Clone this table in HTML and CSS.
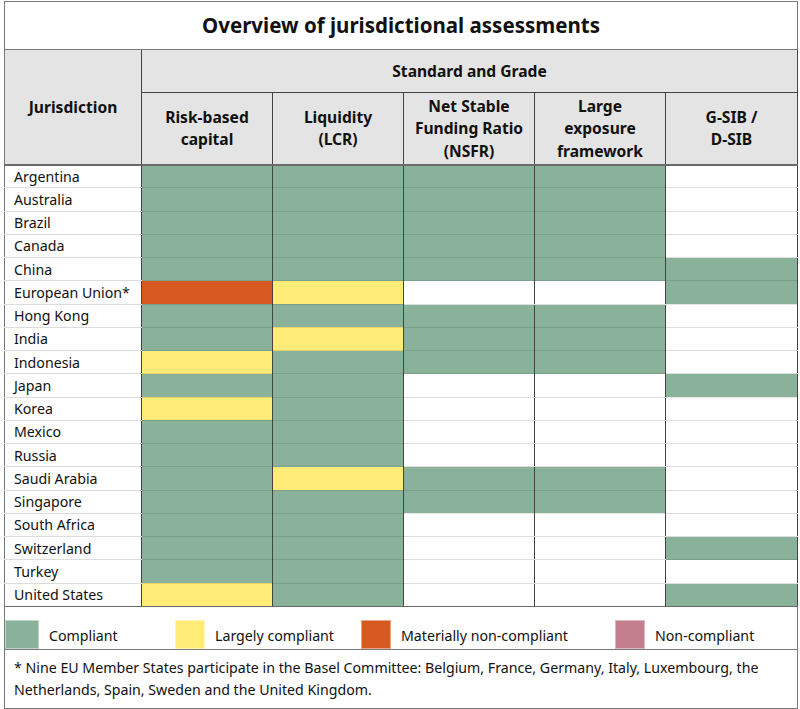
FILE: index.html
```html
<!DOCTYPE html>
<html lang="en">
<head>
<meta charset="utf-8">
<title>Overview of jurisdictional assessments</title>
<link rel="stylesheet" href="styles.css">
</head>
<body>
<div class="page">
<table class="grid">
  <colgroup>
    <col class="c-jur"><col class="c-std"><col class="c-std"><col class="c-std"><col class="c-std"><col class="c-last">
  </colgroup>
  <thead>
    <tr class="r-title"><th colspan="6" class="title">Overview of jurisdictional assessments</th></tr>
    <tr class="r-std">
      <th rowspan="2" class="h jur-h">Jurisdiction</th>
      <th colspan="5" class="h">Standard and Grade</th>
    </tr>
    <tr class="r-sub">
      <th class="h sub">Risk-based<br>capital</th>
      <th class="h sub">Liquidity<br>(LCR)</th>
      <th class="h sub">Net Stable<br>Funding Ratio<br>(NSFR)</th>
      <th class="h sub">Large<br>exposure<br>framework</th>
      <th class="h sub">G-SIB /<br>D-SIB</th>
    </tr>
  </thead>
  <tbody>
    <tr><td class="name">Argentina</td><td class="g"></td><td class="g"></td><td class="g"></td><td class="g"></td><td class="w"></td></tr>
    <tr><td class="name">Australia</td><td class="g"></td><td class="g"></td><td class="g"></td><td class="g"></td><td class="w"></td></tr>
    <tr><td class="name">Brazil</td><td class="g"></td><td class="g"></td><td class="g"></td><td class="g"></td><td class="w"></td></tr>
    <tr><td class="name">Canada</td><td class="g"></td><td class="g"></td><td class="g"></td><td class="g"></td><td class="w"></td></tr>
    <tr><td class="name">China</td><td class="g"></td><td class="g"></td><td class="g"></td><td class="g"></td><td class="g"></td></tr>
    <tr><td class="name">European Union*</td><td class="o"></td><td class="y"></td><td class="w"></td><td class="w"></td><td class="g"></td></tr>
    <tr><td class="name">Hong Kong</td><td class="g"></td><td class="g"></td><td class="g"></td><td class="g"></td><td class="w"></td></tr>
    <tr><td class="name">India</td><td class="g"></td><td class="y"></td><td class="g"></td><td class="g"></td><td class="w"></td></tr>
    <tr><td class="name">Indonesia</td><td class="y"></td><td class="g"></td><td class="g"></td><td class="g"></td><td class="w"></td></tr>
    <tr><td class="name">Japan</td><td class="g"></td><td class="g"></td><td class="w"></td><td class="w"></td><td class="g"></td></tr>
    <tr><td class="name">Korea</td><td class="y"></td><td class="g"></td><td class="w"></td><td class="w"></td><td class="w"></td></tr>
    <tr><td class="name">Mexico</td><td class="g"></td><td class="g"></td><td class="w"></td><td class="w"></td><td class="w"></td></tr>
    <tr><td class="name">Russia</td><td class="g"></td><td class="g"></td><td class="w"></td><td class="w"></td><td class="w"></td></tr>
    <tr><td class="name">Saudi Arabia</td><td class="g"></td><td class="y"></td><td class="g"></td><td class="g"></td><td class="w"></td></tr>
    <tr><td class="name">Singapore</td><td class="g"></td><td class="g"></td><td class="g"></td><td class="g"></td><td class="w"></td></tr>
    <tr><td class="name">South Africa</td><td class="g"></td><td class="g"></td><td class="w"></td><td class="w"></td><td class="w"></td></tr>
    <tr><td class="name">Switzerland</td><td class="g"></td><td class="g"></td><td class="w"></td><td class="w"></td><td class="g"></td></tr>
    <tr><td class="name">Turkey</td><td class="g"></td><td class="g"></td><td class="w"></td><td class="w"></td><td class="w"></td></tr>
    <tr class="last"><td class="name">United States</td><td class="y"></td><td class="g"></td><td class="w"></td><td class="w"></td><td class="g"></td></tr>
  </tbody>
  <tfoot>
    <tr class="r-legend">
      <td colspan="6" class="legend-cell">
        <div class="legend">
          <span class="sw g1"></span><span class="lbl">Compliant</span>
          <span class="sw y1"></span><span class="lbl">Largely compliant</span>
          <span class="sw o1"></span><span class="lbl">Materially non-compliant</span>
          <span class="sw p1"></span><span class="lbl">Non-compliant</span>
        </div>
      </td>
    </tr>
    <tr class="r-note">
      <td colspan="6" class="note">* Nine EU Member States participate in the Basel Committee: Belgium, France, Germany, Italy, Luxembourg, the<br>Netherlands, Spain, Sweden and the United Kingdom.</td>
    </tr>
  </tfoot>
</table>
</div>
</body>
</html>
```

FILE: styles.css
```css
html, body {
  margin: 0;
  padding: 0;
  background: #ffffff;
}

body {
  font-family: "Noto Sans", "Open Sans", sans-serif;
  color: #111111;
}

.page {
  padding: 1px 3px 0 4px;
}

.grid {
  border-collapse: collapse;
  table-layout: fixed;
  width: 794px;
  border: 1px solid #7a7a7a;
}

.c-jur { width: 137px; }
.c-std { width: 131px; }
.c-last { width: 132px; }

.r-title { height: 48px; }
.title {
  font-size: 20.5px;
  font-weight: 700;
  text-align: center;
  vertical-align: middle;
  padding: 0 0 2px 0;
  border-bottom: 1px solid #7a7a7a;
  background: #ffffff;
}

.h {
  background: #e4e4e4;
  font-size: 15.6px;
  font-weight: 700;
  line-height: 22.5px;
  text-align: center;
  vertical-align: middle;
  padding: 0;
  border: 1px solid #444444;
}

.r-std { height: 43px; }
.r-std .h { border-top: 1px solid #7a7a7a; padding-top: 1px; }
.jur-h { border-left: 1px solid #7a7a7a; border-bottom: 2px solid #6a6a6a; }
.r-sub { height: 72px; }
.sub { border-bottom: 2px solid #6a6a6a; }

tbody tr { height: 23.25px; }

td {
  padding: 0;
}

.name {
  font-size: 14.2px;
  line-height: 20px;
  padding: 1px 0 0 9px;
  text-align: left;
  vertical-align: middle;
  border-right: 1px solid #444444;
  border-bottom: 1px solid #dcdcdc;
  white-space: nowrap;
}

tbody td + td {
  border-left: 1px solid #444444;
  border-right: 1px solid #444444;
  border-bottom: 1px solid rgba(0, 0, 0, 0.1);
}

.g { background: #8ab29b; }
.y { background: #ffeb78; }
.o { background: #d65a1f; }
.w { background: #ffffff; }
tbody td.w { border-bottom-color: #dedede; }

tbody tr.last td { border-bottom: 1px solid #6a6a6a; }

.r-legend { height: 43px; }
.legend-cell {
  vertical-align: bottom;
  padding: 0;
  border-bottom: 1px solid #7a7a7a;
}

.legend {
  display: grid;
  grid-template-columns: 34px 136px 30px 156px 30px 224px 30px 1fr;
  align-items: center;
  height: 29px;
  font-size: 14.2px;
}

.sw {
  height: 29px;
  box-sizing: border-box;
  border: 1px solid rgba(255, 255, 255, 0.45);
}

.lbl {
  padding-left: 10px;
  padding-top: 2px;
}

.g1 { background: #8ab29b; }
.y1 { background: #ffeb78; }
.o1 { background: #d65a1f; }
.p1 { background: #c47f8f; }

.r-note { height: 58px; }
.note {
  font-size: 14.2px;
  line-height: 22px;
  padding: 7px 0 7px 9px;
  vertical-align: top;
  white-space: nowrap;
}
```
